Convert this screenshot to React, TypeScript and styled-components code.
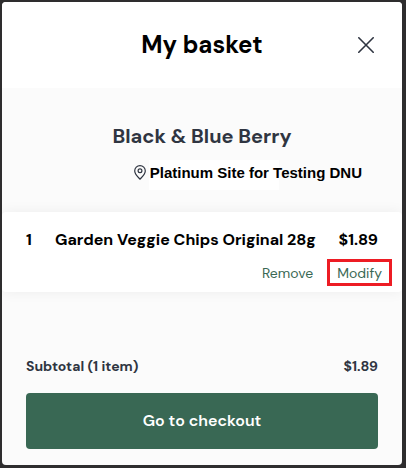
import React from "react";
import styled, { createGlobalStyle } from "styled-components";

const GlobalStyle = createGlobalStyle`
  * { box-sizing: border-box; }
  body {
    margin: 0;
    background: #2e2d2e;
    font-family: "DM Sans", Inter, "Liberation Sans", sans-serif;
    font-optical-sizing: none;
    color: #2f3541;
  }
  button { font-family: inherit; cursor: pointer; }
  h1, h2, p { margin: 0; }
`;

const Backdrop = styled.div`
  min-height: 100vh;
  display: flex;
  padding: 2px 4px 3px 2px;
`;

const Dialog = styled.main`
  flex: 1;
  min-width: 0;
  display: flex;
  flex-direction: column;
  background: #fbfbfb;
  border-radius: 4px;
  overflow: hidden;
`;

const Header = styled.header`
  display: grid;
  grid-template-columns: 24px 1fr 24px;
  align-items: center;
  height: 86px;
  padding: 0 24px;
  background: #fff;
`;

const Title = styled.h1`
  grid-column: 2;
  text-align: center;
  font-size: 24px;
  line-height: 32px;
  font-weight: 700;
  color: #000;
`;

const CloseButton = styled.button`
  display: flex;
  align-items: center;
  justify-content: center;
  width: 24px;
  height: 24px;
  padding: 0;
  border: 0;
  background: none;
  color: #2f3541;
`;

const Store = styled.section`
  display: flex;
  flex-direction: column;
  align-items: center;
  padding: 36px 24px 22px;
`;

const StoreName = styled.h2`
  font-size: 20px;
  line-height: 24px;
  font-weight: 700;
`;

const Site = styled.p`
  display: flex;
  align-self: flex-end;
  align-items: flex-start;
  gap: 3px;
  height: 30px;
  margin: 12px 16px 0 0;
`;

const Pin = styled.svg`
  flex: none;
  width: 12px;
  margin-top: 5px;
`;

const SiteName = styled.span`
  font-family: "Liberation Sans", Arial, sans-serif;
  font-size: 15px;
  line-height: 26px;
  padding: 0 0 4px 1px;
  font-weight: 700;
  color: #000;
  background: linear-gradient(#fff, #fff) left top / 130px 100% no-repeat;
`;

const Item = styled.article`
  background: #fff;
  border-radius: 4px;
  box-shadow: 0 0 14px rgba(0, 0, 0, 0.06);
  padding: 16px 24px 6px;
`;

const ItemRow = styled.div`
  display: grid;
  grid-template-columns: 29px 1fr auto;
  font-size: 16px;
  line-height: 24px;
  font-weight: 700;
  color: #000;
`;

const Actions = styled.div`
  display: flex;
  justify-content: flex-end;
  gap: 14px;
  margin: 7px -14px 0 0;
`;

const TextButton = styled.button<{ $marked?: boolean }>`
  height: 27px;
  padding: 0 ${(p) => (p.$marked ? 7 : 0)}px;
  border: ${(p) => (p.$marked ? "3px solid #ed1c24" : "0")};
  background: none;
  font-size: 14px;
  line-height: 20px;
  color: #396854;
`;

const Footer = styled.footer`
  margin-top: auto;
  padding: 24px 24px 16px;
`;

const Subtotal = styled.div`
  display: flex;
  justify-content: space-between;
  margin-bottom: 17px;
  font-size: 14px;
  line-height: 20px;
  font-weight: 700;
`;

const Checkout = styled.button`
  width: 100%;
  height: 56px;
  border: 0;
  border-radius: 4px;
  background: #396854;
  color: #fff;
  font-size: 16px;
  line-height: 24px;
  font-weight: 600;
`;

export default function App() {
  return (
    <>
      <GlobalStyle />
      <Backdrop>
        <Dialog>
          <Header>
            <Title>My basket</Title>
            <CloseButton aria-label="Close">
              <svg width="16" height="16" viewBox="0 0 16 16" fill="none" stroke="currentColor" strokeWidth="1.6" strokeLinecap="round">
                <path d="M.8.8l14.4 14.4M15.2.8L.8 15.2" />
              </svg>
            </CloseButton>
          </Header>
          <Store>
            <StoreName>Black &amp; Blue Berry</StoreName>
            <Site>
              <Pin height="15" viewBox="0 0 12 15" fill="none" stroke="currentColor" strokeWidth="1.2" aria-hidden="true">
                <path d="M6 14.2C4.6 12.6.7 9.2.7 5.9a5.3 5.3 0 0 1 10.6 0c0 3.3-3.9 6.7-5.3 8.3z" />
                <circle cx="6" cy="5.8" r="1.9" />
              </Pin>
              <SiteName>Platinum Site for Testing DNU</SiteName>
            </Site>
          </Store>
          <Item>
            <ItemRow>
              <span>1</span>
              <span>Garden Veggie Chips Original 28g</span>
              <span>$1.89</span>
            </ItemRow>
            <Actions>
              <TextButton>Remove</TextButton>
              <TextButton $marked>Modify</TextButton>
            </Actions>
          </Item>
          <Footer>
            <Subtotal>
              <span>Subtotal (1 item)</span>
              <span>$1.89</span>
            </Subtotal>
            <Checkout>Go to checkout</Checkout>
          </Footer>
        </Dialog>
      </Backdrop>
    </>
  );
}
